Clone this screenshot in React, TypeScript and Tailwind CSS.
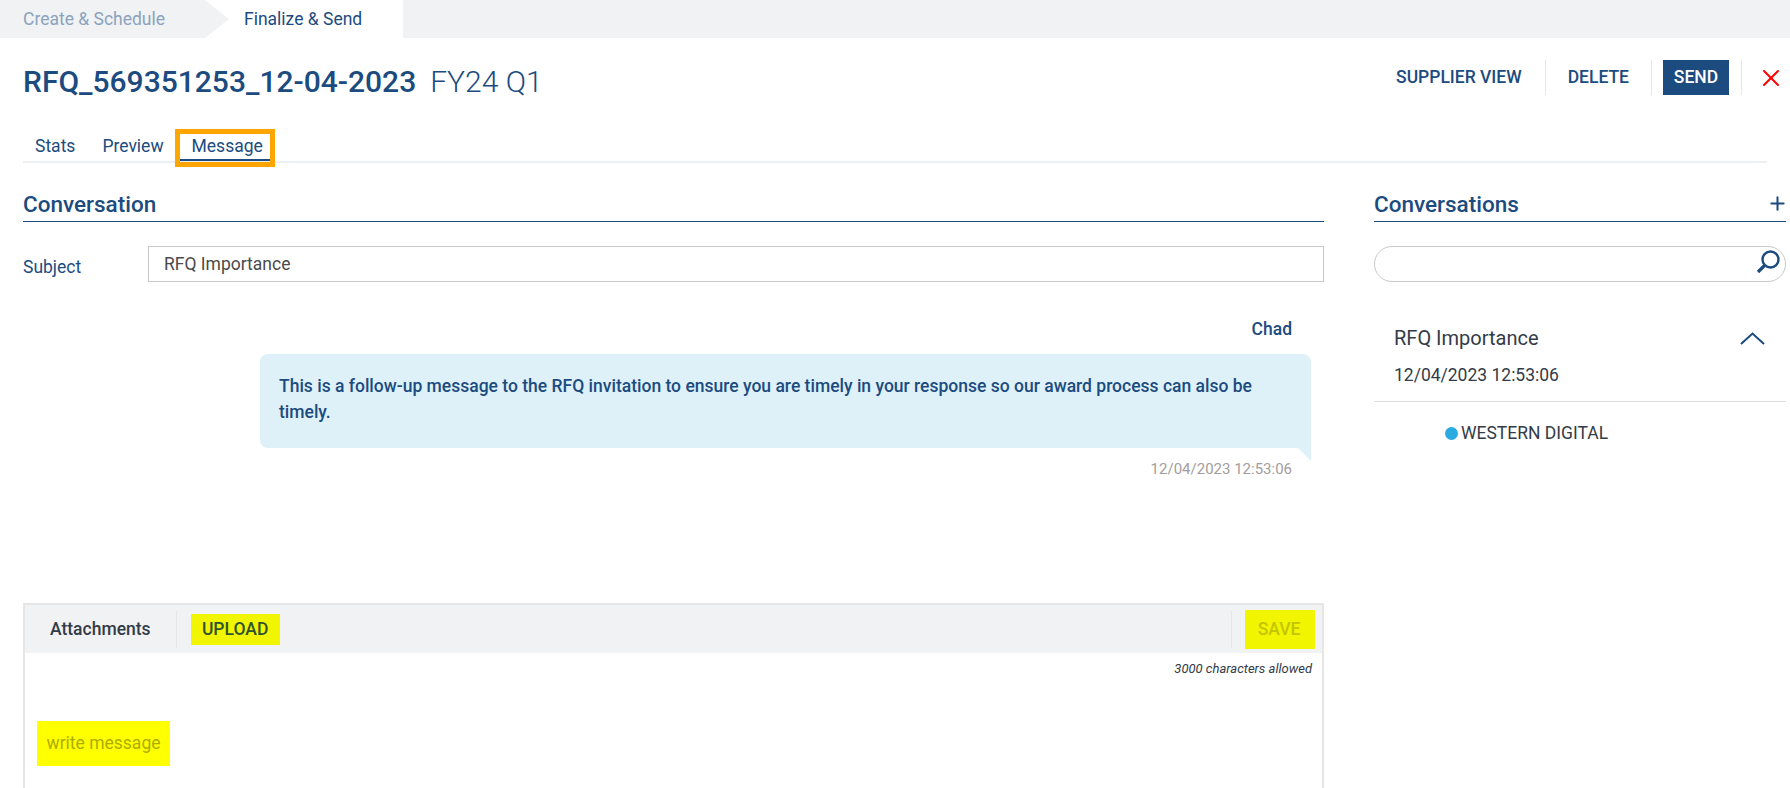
import { Plus, X } from "lucide-react";

const navy = "text-[#1c4b80]";

function Divider({ className = "" }: { className?: string }) {
    return <div className={`w-px bg-[#e4e6e9] ${className}`} />;
}

function Tab({ label, active }: { label: string; active?: boolean }) {
    return (
        <div className={`relative flex h-[33px] items-center px-3 pt-[3px] text-[17.5px] ${navy}`}>
            {label}
            {active && (
                <>
                    <span className="absolute bottom-0 left-0 right-[2px] h-[2px] bg-[#1c4b80]" />
                    <span className="absolute -bottom-[6px] -left-[5px] right-0 top-[1px] border-[5px] border-[#ffa500]" />
                </>
            )}
        </div>
    );
}

function SectionHeading({ title, children }: { title: string; children?: React.ReactNode }) {
    return (
        <div className="flex h-[33px] items-center justify-between border-b border-[#1c4b80]">
            <h2 className={`-mt-[1px] text-[22.5px] font-medium ${navy}`}>{title}</h2>
            {children}
        </div>
    );
}

export default function App() {
    return (
        <div className="h-[788px] w-full overflow-hidden bg-white font-['Roboto',sans-serif]">
            {/* Wizard steps */}
            <div className="flex h-[38px] bg-[#f1f2f4]">
                <div className="flex h-full w-[205px] items-center pl-[23px] text-[17.5px] text-[#8ba3bd]">
                    Create &amp; Schedule
                </div>
                <div className="relative flex h-full w-[198px] items-center bg-white pl-[39px] text-[17.5px] text-[#1c4b80]">
                    <span className="absolute left-0 top-0 h-0 w-0 border-y-[19px] border-l-[24px] border-y-transparent border-l-[#f1f2f4]" />
                    Finalize &amp; Send
                </div>
            </div>

            {/* Title row */}
            <div className="mt-[22px] flex h-[35px] items-center justify-between pl-[23px] pr-[5px]">
                <div className="flex items-baseline gap-[14px] pt-[8px]">
                    <h1 className={`text-[30px] font-medium ${navy}`}>RFQ_569351253_12-04-2023</h1>
                    <span className={`text-[30px] font-light ${navy}`}>FY24 Q1</span>
                </div>
                <div className={`flex h-full items-center text-[17.5px] font-medium ${navy}`}>
                    <span>SUPPLIER VIEW</span>
                    <Divider className="ml-[23px] h-full" />
                    <span className="ml-[22px]">DELETE</span>
                    <Divider className="ml-[22px] h-full" />
                    <button className="ml-[11px] flex h-full w-[66px] items-center justify-center bg-[#1c4b80] font-medium text-white">
                        SEND
                    </button>
                    <Divider className="ml-[12px] h-full" />
                    <X size={28} strokeWidth={1.7} className="ml-[15px] text-[#f00]" />
                </div>
            </div>

            {/* Tabs */}
            <div className="mx-[23px] mt-[33px] flex h-[35px] border-b-2 border-[#ecf0f3]">
                <Tab label="Stats" />
                <div className="w-[3px]" />
                <Tab label="Preview" />
                <div className="w-[4px]" />
                <Tab label="Message" active />
            </div>

            <div className="mt-[26px] flex gap-[50px] pl-[23px] pr-[4px]">
                {/* Conversation */}
                <div className="w-[1301px] shrink-0">
                    <SectionHeading title="Conversation" />
                    <div className="mt-[24px] flex h-[36px] items-center">
                        <label className={`w-[125px] pt-[6px] text-[17.5px] ${navy}`}>Subject</label>
                        <div className="flex h-full flex-1 items-center border border-[#c9c9c9] pl-[15px] text-[17.5px] text-[#4a4a4a]">
                            RFQ Importance
                        </div>
                    </div>

                    <div className="mt-[36px] flex flex-col items-end">
                        <div className={`mr-[32px] text-[17.5px] font-medium leading-[22px] ${navy}`}>Chad</div>
                        <div className="relative mr-[13px] mt-[14px] w-[1051px] rounded-t-lg rounded-bl-lg bg-[#def1f9] px-[19px] pb-[23px] pt-[19px]">
                            <p className={`text-[17.5px] font-medium leading-[26px] ${navy}`}>
                                This is a follow-up message to the RFQ invitation to ensure you are timely in your
                                response so our award process can also be timely.
                            </p>
                            <span className="absolute -bottom-[13px] right-0 h-0 w-0 border-l-[13px] border-t-[13px] border-l-transparent border-t-[#def1f9]" />
                        </div>
                        <div className="mr-[32px] mt-[12px] text-[15px] leading-[18px] text-[#a39d9d]">12/04/2023 12:53:06</div>
                    </div>

                    {/* Composer */}
                    <div className="mt-[125px] h-[300px] border-x-2 border-t-2 border-[#e6e6e6]">
                        <div className="flex h-[48px] items-center bg-[#f1f2f4] pr-[7px]">
                            <span className="pl-[25px] text-[17.5px] font-medium text-[#333b47]">Attachments</span>
                            <Divider className="ml-[25px] h-[37px]" />
                            <button className="ml-[14px] flex h-[31px] w-[89px] items-center justify-center bg-[#f2f500] text-[17.5px] font-medium text-[#2f5330]">
                                UPLOAD
                            </button>
                            <Divider className="ml-auto h-[37px]" />
                            <button className="ml-[13px] flex h-[39px] w-[70px] items-center justify-center bg-[#f2f500] pr-[2px] text-[17.5px] font-medium text-[#c4c400]">
                                SAVE
                            </button>
                        </div>
                        <div className="pr-[10px] pt-[7px] text-right text-[13px] italic leading-[18px] text-[#333b47]">
                            3000 characters allowed
                        </div>
                        <div className="ml-[12px] mt-[43px] flex h-[45px] w-[133px] items-center justify-center bg-[#ffff00] text-[17.5px] text-[#adad00]">
                            write message
                        </div>
                    </div>
                </div>

                {/* Conversations list */}
                <div className="w-[412px] shrink-0">
                    <SectionHeading title="Conversations">
                        <Plus size={21} strokeWidth={2.3} className={`-mr-[2px] -mt-[3px] ${navy}`} />
                    </SectionHeading>
                    <div className="relative mt-[24px] h-[36px] rounded-full border border-[#c9c9c9]">
                        <svg
                            width="26"
                            height="26"
                            viewBox="0 0 26 26"
                            fill="none"
                            stroke="#1c4b80"
                            className="absolute right-[4px] top-[2px]"
                        >
                            <circle cx="15.5" cy="10.5" r="8" strokeWidth="2.4" />
                            <path d="M9.5 16.5 3 23" strokeWidth="3.2" />
                        </svg>
                    </div>
                    <div className="mt-[43px] flex items-center justify-between pl-[20px] pr-[21px]">
                        <span className="text-[20px] leading-[26px] text-[#333b47]">RFQ Importance</span>
                        <svg width="25" height="13" viewBox="0 0 25 13" fill="none" stroke="#1c4b80" strokeWidth="2">
                            <path d="M1 12 12.5 1.5 24 12" />
                        </svg>
                    </div>
                    <div className="pl-[20px] pt-[13px] text-[17.5px] leading-[22px] text-[#333b47]">12/04/2023 12:53:06</div>
                    <div className="mt-[15px] border-t border-[#dedede]" />
                    <div className="ml-[71px] mt-[20px] flex items-center gap-[3px] text-[17.5px] leading-[22px] text-[#333b47]">
                        <span className="size-[13px] rounded-full bg-[#29abe2]" />
                        WESTERN DIGITAL
                    </div>
                </div>
            </div>
        </div>
    );
}
